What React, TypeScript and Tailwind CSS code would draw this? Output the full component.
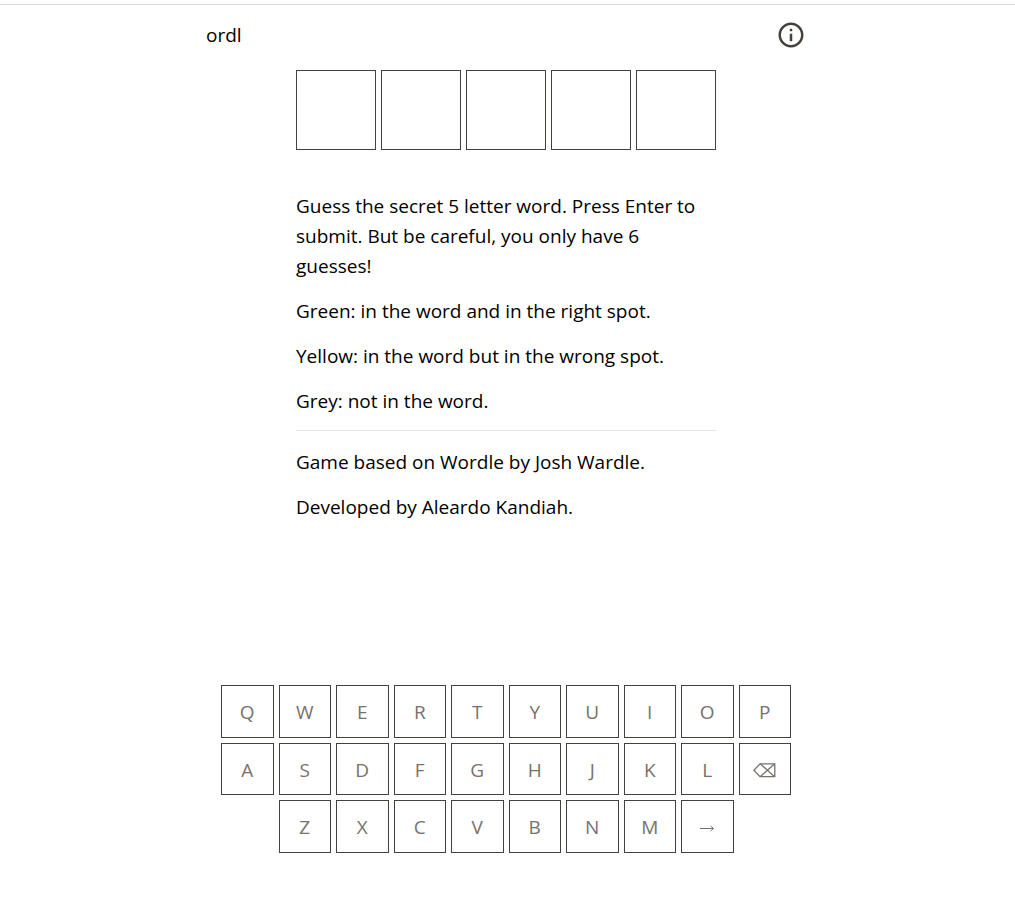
import { MdInfoOutline } from "react-icons/md";

const rows = ["QWERTYUIOP", "ASDFGHJKL<", "ZXCVBNM>"];

function BackspaceIcon() {
  return (
    <svg width="23" height="17" viewBox="0 -2 23 17" fill="none" stroke="currentColor" strokeWidth="1.3" aria-hidden="true">
      <path d="M7 0.8H21.8V13.7H7L0.9 7.2Z" />
      <path d="M7.4 1L21.4 13.5M21.4 1L7.4 13.5" />
    </svg>
  );
}

function EnterIcon() {
  return (
    <svg width="14" height="9" viewBox="0 -2 14 9" fill="none" stroke="currentColor" aria-hidden="true">
      <path d="M0 3.5H13.4M10.6 0.9L13.4 3.5L10.6 6.1" />
    </svg>
  );
}

function Key({ value }: { value: string }) {
  const label = value === "<" ? "Backspace" : value === ">" ? "Enter" : value;
  return (
    <button
      type="button"
      aria-label={label}
      className="flex aspect-square items-center justify-center border border-[#44403c] pt-0.5 text-[#78716c]"
    >
      {value === "<" ? <BackspaceIcon /> : value === ">" ? <EnterIcon /> : value}
    </button>
  );
}

export default function App() {
  return (
    <div className="mt-1 border-t border-[#d9d9d9] bg-white pr-[3px] font-['Open_Sans','Noto_Sans',sans-serif] text-[19px] leading-[30px] text-black">
      <div className="mx-auto max-w-[600px]">
        <header className="flex items-center justify-between pt-[15px]">
          <h1>ordl</h1>
          <button type="button" aria-label="Information" className="text-[#44403c]">
            <MdInfoOutline size={30} />
          </button>
        </header>

        <main>
          <div className="mx-auto mt-5 max-w-[420px]">
            <div className="grid grid-cols-5 gap-[5px]">
              {[0, 1, 2, 3, 4].map((i) => (
                <div key={i} className="aspect-square border border-[#44403c]" />
              ))}
            </div>
            <div className="mt-[41px] flex flex-col gap-[15px]">
              <p>
                Guess the secret 5 letter word. Press Enter to submit. But be careful, you only have 6 guesses!
              </p>
              <p>Green: in the word and in the right spot.</p>
              <p>Yellow: in the word but in the wrong spot.</p>
              <p>Grey: not in the word.</p>
              <hr className="-mt-px mb-px border-[#e5e5e5]" />
              <p>Game based on Wordle by Josh Wardle.</p>
              <p>Developed by Aleardo Kandiah.</p>
            </div>
          </div>

          <div className="mt-[163px] flex flex-col gap-[5px] px-[15px]">
            {rows.map((row) => (
              <div key={row} className="grid grid-cols-10 gap-[5px]">
                {row.length === 8 && <span />}
                {row.split("").map((value) => (
                  <Key key={value} value={value} />
                ))}
              </div>
            ))}
          </div>
        </main>
      </div>
    </div>
  );
}
